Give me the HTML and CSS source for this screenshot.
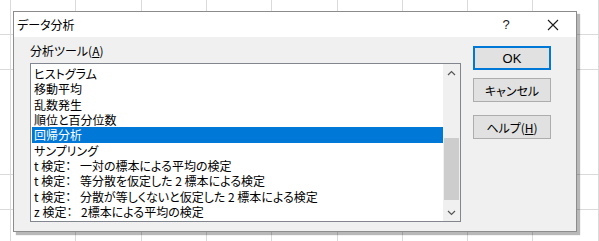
FILE: index.html
```html
<!DOCTYPE html>
<html lang="ja">
<head>
  <meta charset="UTF-8" />
  <title>データ分析</title>
  <link rel="stylesheet" href="styles.css">
</head>
<body>

  <div class="sheet"></div>

  <div class="dialog">
    <div class="titlebar">
      <span class="title">データ分析</span>
      <span class="help-mark">?</span>
      <svg class="close" width="12" height="12" viewBox="0 0 12 12">
        <path d="M1 1 L11 11 M11 1 L1 11" stroke="#1a1a1a" stroke-width="1.1" fill="none" />
      </svg>
    </div>

    <div class="content">
      <div class="tools">
        <div class="label">分析ツール(<u>A</u>)</div>
        <div class="listbox">
          <ul class="items">
            <li>ヒストグラム</li>
            <li>移動平均</li>
            <li>乱数発生</li>
            <li>順位と百分位数</li>
            <li class="selected">回帰分析</li>
            <li>サンプリング</li>
            <li>t 検定：&ensp;&nbsp;一対の標本による平均の検定</li>
            <li>t 検定：&ensp;&nbsp;等分散を仮定した&nbsp;2&nbsp;標本による検定</li>
            <li>t 検定：&ensp;&nbsp;分散が等しくないと仮定した&nbsp;2&nbsp;標本による検定</li>
            <li>z 検定：&ensp;&nbsp;2標本による平均の検定</li>
          </ul>
          <div class="scrollbar">
            <svg class="arrow" width="9" height="6" viewBox="0 0 9 6">
              <path d="M1 5 L4.5 1.5 L8 5" stroke="#555" stroke-width="1.2" fill="none" />
            </svg>
            <div class="track">
              <div class="thumb"></div>
            </div>
            <svg class="arrow" width="9" height="6" viewBox="0 0 9 6">
              <path d="M1 1 L4.5 4.5 L8 1" stroke="#555" stroke-width="1.2" fill="none" />
            </svg>
          </div>
        </div>
      </div>

      <div class="buttons">
        <button class="btn default">OK</button>
        <button class="btn">キャンセル</button>
        <button class="btn help">ヘルプ(<u>H</u>)</button>
      </div>
    </div>
  </div>

</body>
</html>
```

FILE: styles.css
```css
body {
  margin: 0;
  width: 599px;
  height: 241px;
  overflow: hidden;
  font-family: "Noto Sans CJK JP", "Noto Sans", sans-serif;
  font-size: 12px;
  color: #000;
  font-feature-settings: "palt";
}
.sheet {
  width: 599px;
  height: 241px;
  background-color: #fff;
  background-image:
    repeating-linear-gradient(to bottom, transparent 0, transparent 17px, #dadada 17px, #dadada 17.5px),
    repeating-linear-gradient(to right, transparent 0, transparent 10px, #dadada 10px, #dadada 11px, transparent 11px, transparent 65.3px);
}
.dialog {
  position: absolute;
  left: 13px;
  top: 11px;
  width: 562px;
  height: 219px;
  border: 1px solid #8c8c8c;
  background: #f0f0f0;
  box-shadow: 3px 3px 1px rgba(0, 0, 0, 0.28);
  display: flex;
  flex-direction: column;
}
.titlebar {
  height: 25px;
  background: #fff;
  display: flex;
  align-items: center;
  padding-left: 3px;
}
.title {
  flex: 1;
  line-height: 16px;
}
.help-mark {
  width: 14px;
  text-align: center;
  margin-right: 34px;
  font-family: "Liberation Sans", sans-serif;
  font-size: 13px;
  color: #1a1a1a;
}
.close {
  margin-right: 17px;
}
.content {
  flex: 1;
  display: flex;
  padding: 6px 25px 0 16px;
  gap: 12px;
}
.tools {
  display: flex;
  flex-direction: column;
}
.label {
  line-height: 16px;
  height: 20px;
}
.listbox {
  width: 429px;
  height: 157px;
  border: 1px solid #82878f;
  background: #fff;
  display: flex;
}
.items {
  list-style: none;
  margin: 0;
  padding: 2px 0 0 1px;
  flex: 1;
}
.items li {
  height: 15.33px;
  line-height: 15.33px;
  padding-left: 2px;
  white-space: nowrap;
}
.items li.selected {
  background: #0078d7;
  color: #fff;
}
.scrollbar {
  width: 17px;
  background: #f0f0f0;
  display: flex;
  flex-direction: column;
  align-items: center;
}
.arrow {
  margin: 6px 0 5px;
}
.track {
  flex: 1;
  width: 100%;
  display: flex;
  flex-direction: column;
  justify-content: flex-end;
  padding-bottom: 4px;
}
.thumb {
  height: 62px;
  margin: 0 1px;
  background: #cdcdcd;
}
.buttons {
  display: flex;
  flex-direction: column;
  padding-top: 3px;
}
.btn {
  width: 78px;
  height: 24px;
  padding: 0;
  border: 1px solid #adadad;
  background: #e1e1e1;
  font-family: inherit;
  font-size: 12px;
  color: #000;
  font-feature-settings: "palt";
  margin-bottom: 8px;
}
.btn.default {
  border: 2px solid #0078d7;
  font-family: "Liberation Sans", sans-serif;
  font-size: 13px;
}
.btn.help {
  margin-top: 5px;
}
```
